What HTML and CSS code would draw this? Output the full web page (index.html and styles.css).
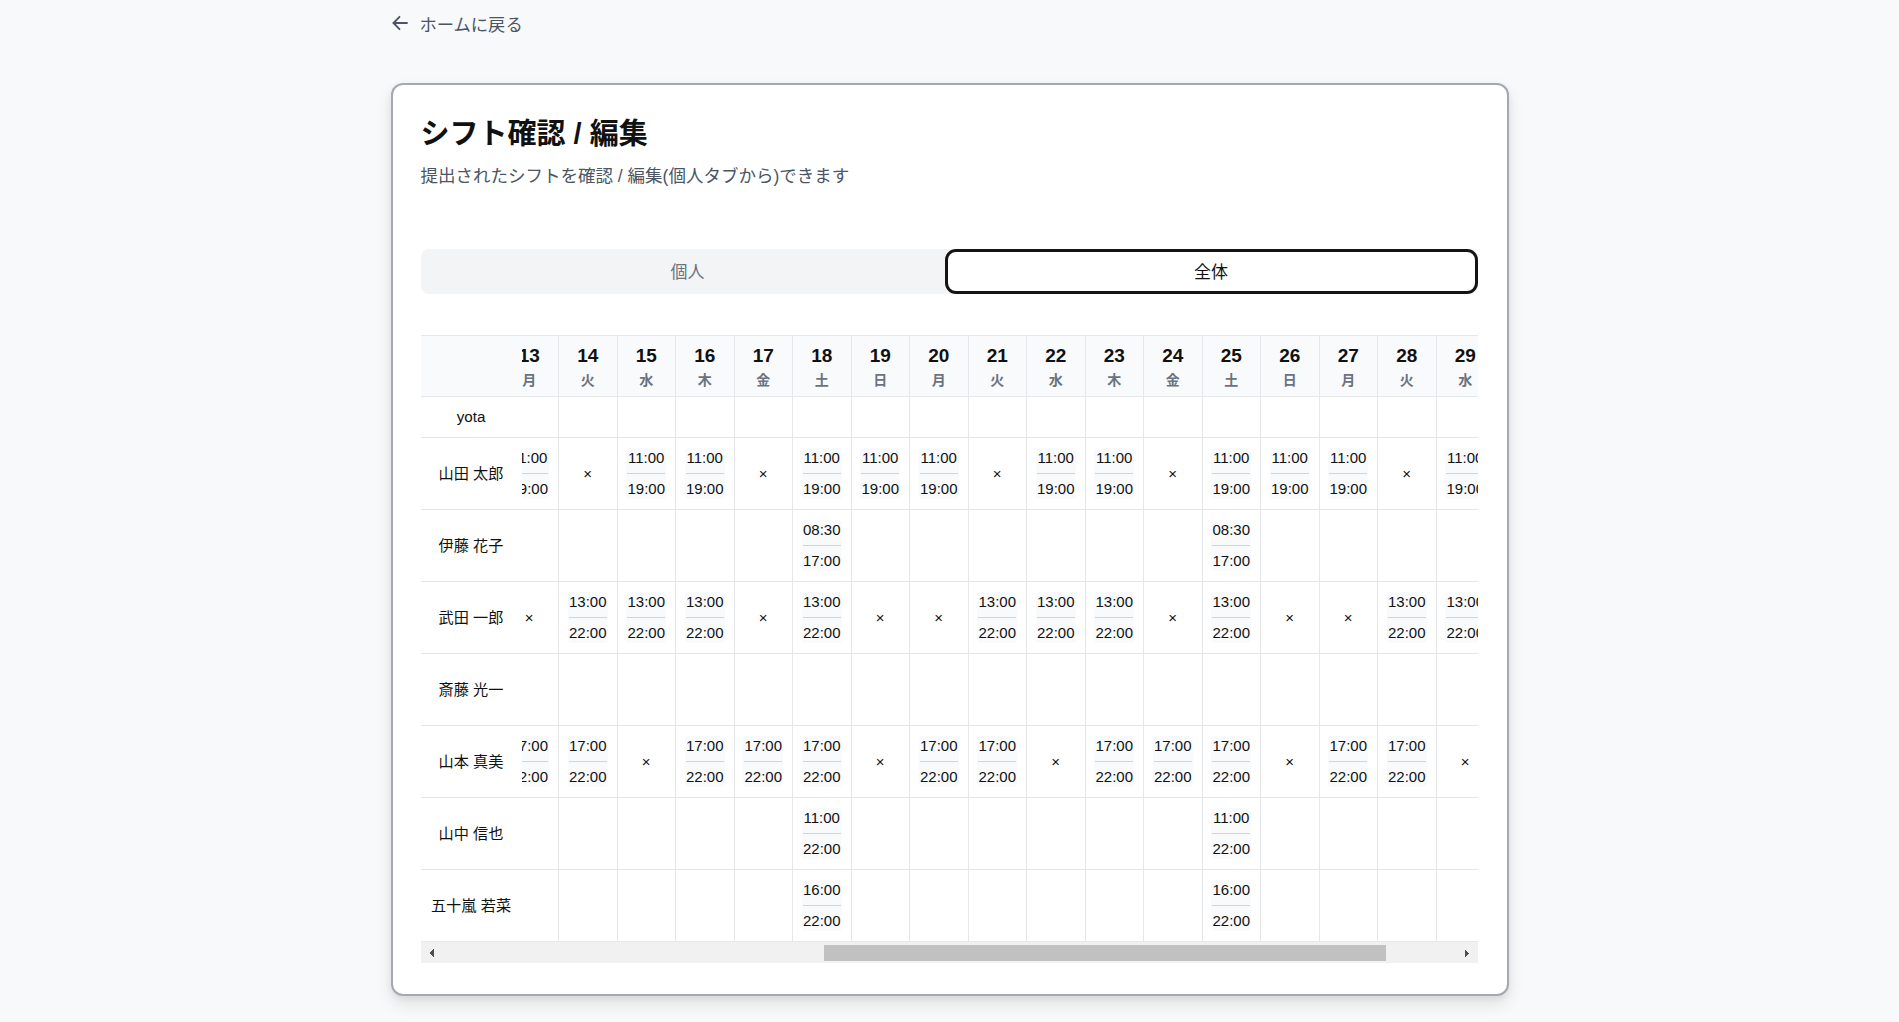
FILE: index.html
```html
<!DOCTYPE html>
<html lang="ja">
<head>
<meta charset="utf-8">
<title>シフト確認 / 編集</title>
<link rel="stylesheet" href="styles.css">
</head>
<body>
<div class="page">
  <a class="back" href="#">
    <svg class="back-icon" width="16" height="16" viewBox="0 0 16 16" fill="none" stroke="currentColor" stroke-width="1.8" stroke-linecap="round" stroke-linejoin="round"><path d="M15 8H1.5"/><path d="M7.5 1.8 1.5 8l6 6.2"/></svg>
    <span>ホームに戻る</span>
  </a>
  <section class="card">
    <h1 class="title">シフト確認 / 編集</h1>
    <p class="subtitle">提出されたシフトを確認 / 編集(個人タブから)できます</p>
    <div class="tabs">
      <button class="tab tab-idle">個人</button>
      <button class="tab tab-active">全体</button>
    </div>
    <div class="table-box">
      <div class="scroller" id="scroller">
        <table class="grid" id="grid">
          <colgroup id="cols"></colgroup>
          <thead><tr id="head"></tr></thead>
          <tbody id="body"></tbody>
        </table>
      </div>
      <div class="hbar">
        <div class="hbar-btn hbar-left"></div>
        <div class="hbar-track" id="track"><div class="hbar-thumb" id="thumb"></div></div>
        <div class="hbar-btn hbar-right"></div>
      </div>
    </div>
  </section>
</div>
<script src="app.js"></script>
</body>
</html>
```
FILE: styles.css
```css
* { box-sizing: border-box; }
html, body { margin: 0; padding: 0; }
body {
  background: #f8f9fb;
  font-family: "Liberation Sans", "Noto Sans CJK JP", sans-serif;
  color: #111;
}
.page {
  width: 1118px;
  margin: 0 auto;
  padding-top: 11px;
  padding-bottom: 40px;
}
.back {
  display: flex;
  align-items: center;
  gap: 12px;
  height: 24px;
  color: #4b5563;
  font-size: 17.3px;
  text-decoration: none;
}
.back-icon { display: block; margin-left: 1px; }
.card {
  margin-top: 48px;
  background: #fff;
  border: 2px solid #a3a8b3;
  border-radius: 12px;
  padding: 30px 29px 31px 28px;
  box-shadow: 0 8px 16px rgba(0, 0, 0, 0.10), 0 2px 6px rgba(0, 0, 0, 0.06);
}
.title {
  margin: 0;
  font-size: 29px;
  line-height: 38px;
  font-weight: 700;
  color: #111;
}
.subtitle {
  margin: 10px 0 0;
  font-size: 17.5px;
  line-height: 26px;
  color: #4b5563;
}
.tabs {
  margin-top: 60px;
  height: 45px;
  display: grid;
  grid-template-columns: 524px 1fr;
  background: #f3f4f6;
  border-radius: 8px;
}
.tab {
  border: 0;
  background: transparent;
  font-family: inherit;
  font-size: 17px;
  color: #6b7280;
  padding: 0 0 2px;
  border-radius: 8px;
}
.tab-idle { padding-left: 10px; }
.tab-active {
  background: #fff;
  color: #111;
  border: 3px solid #141414;
  border-radius: 11px;
}
.table-box { margin-top: 41px; }
.scroller {
  overflow-x: auto;
  scrollbar-width: none;
}
.scroller::-webkit-scrollbar { display: none; }
.grid {
  border-collapse: separate;
  border-spacing: 0;
  table-layout: fixed;
  width: 1914.5px;
}
.col-name { width: 101px; }
.col-day { width: 58.5px; }
.grid th, .grid td {
  padding: 0;
  text-align: center;
  vertical-align: middle;
  border-bottom: 1px solid #e5e7eb;
}
.grid thead th {
  background: #f9fafb;
  border-top: 1px solid #e5e7eb;
  padding: 8px 0 6px;
}
.grid .day { border-right: 1px solid #e5e7eb; }
.grid .name {
  position: sticky;
  left: 0;
  z-index: 2;
  background: #fff;
  font-size: 15.2px;
  font-weight: 400;
  color: #111;
  white-space: nowrap;
}
.grid tbody .name .cell { padding-bottom: 4px; }
.grid thead .name { background: #f9fafb; }
.num {
  display: block;
  font-size: 19px;
  line-height: 24px;
  font-weight: 700;
  color: #111;
}
.wd {
  display: block;
  margin-top: 2px;
  font-size: 14px;
  line-height: 20px;
  font-weight: 700;
  color: #6b7280;
}
.grid tbody td { padding: 10px 0; }
.cell {
  min-height: 51px;
  display: flex;
  align-items: center;
  justify-content: center;
  white-space: nowrap;
}
.row-compact .cell { min-height: 20px; }
.grid tbody .row-compact .name .cell { padding-bottom: 2px; }
.shift {
  display: flex;
  flex-direction: column;
  background: #f8fafc;
  border-radius: 4px;
  padding: 0 1px;
}
.t {
  display: block;
  font-size: 15px;
  line-height: 20px;
  color: #111;
}
.sep {
  height: 1px;
  background: #d1d5db;
  margin: 5px 0;
}
.off {
  font-size: 15px;
  line-height: 20px;
  color: #111;
}
.hbar {
  display: flex;
  height: 21px;
  background: #f1f1f1;
}
.hbar-btn {
  width: 20px;
  flex: none;
  background-repeat: no-repeat;
  background-size: 4px 4px, 4px 4px;
}
.hbar-left {
  background-image:
    linear-gradient(to bottom right, transparent 50%, #505050 50%),
    linear-gradient(to top right, transparent 50%, #505050 50%);
  background-position: 9px 7px, 9px 11px;
}
.hbar-right {
  background-image:
    linear-gradient(to bottom left, transparent 50%, #505050 50%),
    linear-gradient(to top left, transparent 50%, #505050 50%);
  background-position: 7px 7px, 7px 11px;
}
.hbar-track {
  flex: 1;
  display: flex;
  padding: 3px 0 2px;
}
.hbar-thumb {
  flex: none;
  background: #c1c1c1;
}
```
FILE: app.js
```js
(function () {
  var WD = ['日', '月', '火', '水', '木', '金', '土'];
  var DAYS = 31;
  var FIRST_WD = 3; // 2025-10-01 is Wednesday
  function wdOf(d) { return (FIRST_WD + d - 1) % 7; }

  var members = [
    { name: 'yota', compact: true, rule: function () { return null; } },
    { name: '山田 太郎', rule: function (w) { return (w === 2 || w === 5) ? 'x' : ['11:00', '19:00']; } },
    { name: '伊藤 花子', rule: function (w) { return w === 6 ? ['08:30', '17:00'] : null; } },
    { name: '武田 一郎', rule: function (w) { return (w === 0 || w === 1 || w === 5) ? 'x' : ['13:00', '22:00']; } },
    { name: '斎藤 光一', rule: function () { return null; } },
    { name: '山本 真美', rule: function (w) { return (w === 0 || w === 3) ? 'x' : ['17:00', '22:00']; } },
    { name: '山中 信也', rule: function (w) { return w === 6 ? ['11:00', '22:00'] : null; } },
    { name: '五十嵐 若菜', rule: function (w) { return w === 6 ? ['16:00', '22:00'] : null; } }
  ];

  var cols = '<col class="col-name">';
  var head = '<th class="name"></th>';
  for (var d = 1; d <= DAYS; d++) {
    cols += '<col class="col-day">';
    head += '<th class="day"><span class="num">' + d + '</span><span class="wd">' + WD[wdOf(d)] + '</span></th>';
  }
  document.getElementById('cols').innerHTML = cols;
  document.getElementById('head').innerHTML = head;

  var body = '';
  members.forEach(function (m) {
    var row = '<tr class="' + (m.compact ? 'row-compact' : 'row-tall') + '"><td class="name"><div class="cell">' + m.name + '</div></td>';
    for (var d = 1; d <= DAYS; d++) {
      var v = m.rule(wdOf(d));
      var inner = '';
      if (v === 'x') inner = '<span class="off">×</span>';
      else if (v) inner = '<div class="shift"><span class="t">' + v[0] + '</span><span class="sep"></span><span class="t">' + v[1] + '</span></div>';
      row += '<td class="day"><div class="cell">' + inner + '</div></td>';
    }
    row += '</tr>';
    body += row;
  });
  document.getElementById('body').innerHTML = body;

  var sc = document.getElementById('scroller');
  sc.scrollLeft = 723;
  var track = document.getElementById('track');
  var thumb = document.getElementById('thumb');
  var tw = track.clientWidth;
  thumb.style.width = (tw * sc.clientWidth / sc.scrollWidth) + 'px';
  thumb.style.marginLeft = (tw * sc.scrollLeft / sc.scrollWidth) + 'px';
})();
```
